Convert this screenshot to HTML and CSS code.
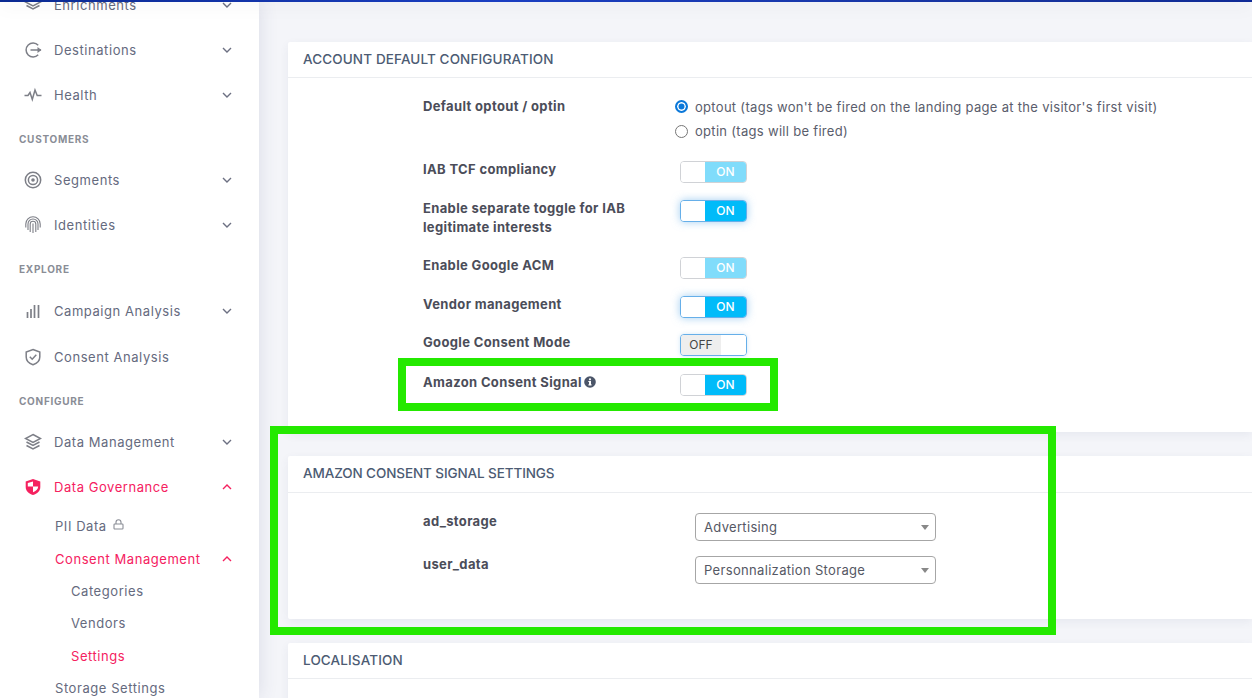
FILE: index.html
```html
<!DOCTYPE html>
<html lang="en">
<head>
<meta charset="utf-8">
<title>Consent Management Settings</title>
<link rel="stylesheet" href="styles.css">
</head>
<body>
<div class="topbar"></div>
<div class="shell">
  <aside class="sidebar">
    <nav class="nav">
      <a class="item"><svg class="ico" viewBox="0 0 18 18"><path d="M9 2 16.5 6 9 10 1.5 6Z"/><path d="M2.5 9.5 9 13l6.5-3.5"/></svg><span>Enrichments</span><svg class="chev" viewBox="0 0 10 6"><path d="M1 1l4 4 4-4"/></svg></a>
      <a class="item"><svg class="ico" viewBox="0 0 18 18"><path d="M14.2 4.2A7 7 0 1 0 14.2 13.8"/><path d="M6.5 9H17"/><path class="fill" d="M13.5 6 17.5 9l-4 3Z"/></svg><span>Destinations</span><svg class="chev" viewBox="0 0 10 6"><path d="M1 1l4 4 4-4"/></svg></a>
      <a class="item"><svg class="ico" viewBox="0 0 18 18"><path d="M.5 9.5H4l2-3 2.3 7L11 4l2.2 5.5h4.3"/></svg><span>Health</span><svg class="chev" viewBox="0 0 10 6"><path d="M1 1l4 4 4-4"/></svg></a>
      <div class="section section-customers">CUSTOMERS</div>
      <a class="item"><svg class="ico" viewBox="0 0 18 18"><circle cx="9" cy="9" r="7.7"/><circle cx="9" cy="9" r="4.6"/><circle class="fill" cx="9" cy="9" r="1.8"/></svg><span>Segments</span><svg class="chev" viewBox="0 0 10 6"><path d="M1 1l4 4 4-4"/></svg></a>
      <a class="item"><svg class="ico ico-thin" viewBox="0 0 18 18"><path d="M1.800 11.500V8a7.200 7.200 0 0 1 14.400 0v3.500"/><path d="M4 14V8a5 5 0 0 1 10 0v6"/><path d="M6.200 16V8a2.800 2.800 0 0 1 5.600 0v8"/><path d="M9 7.500V17"/></svg><span>Identities</span><svg class="chev" viewBox="0 0 10 6"><path d="M1 1l4 4 4-4"/></svg></a>
      <div class="section section-explore">EXPLORE</div>
      <a class="item"><svg class="ico" viewBox="0 0 18 18"><path d="M3.500 10v6M7 7v9M10.500 3v13M14.500 3v13" stroke-width="1.700"/></svg><span>Campaign Analysis</span><svg class="chev" viewBox="0 0 10 6"><path d="M1 1l4 4 4-4"/></svg></a>
      <a class="item item-consent"><svg class="ico" viewBox="0 0 18 18"><path d="M9 1.500 15.800 4v5c0 4-2.800 6.400-6.800 7.700C5 15.400 2.200 13 2.200 9V4Z"/><path d="M5.800 8.800 8.200 11.200 12.300 6.700"/></svg><span>Consent Analysis</span></a>
      <div class="section section-configure">CONFIGURE</div>
      <a class="item"><svg class="ico" viewBox="0 0 18 18"><path d="M9 1.500 16.500 5.500 9 9.500 1.500 5.500Z"/><path d="M2.500 9 9 12.500 15.500 9"/><path d="M2.500 12.500 9 16 15.500 12.500"/></svg><span>Data Management</span><svg class="chev" viewBox="0 0 10 6"><path d="M1 1l4 4 4-4"/></svg></a>
      <a class="item active"><svg class="ico" viewBox="0 0 18 18"><path class="fill" d="M9 1 16.300 3.500v5.500c0 4-3 6.700-7.300 8-4.300-1.300-7.300-4-7.300-8V3.500Z"/><path class="cut" d="M9 3.500v5H3.800V5ZM9 8.500h5.200c-.2 2.800-2.300 4.700-5.200 5.800Z"/></svg><span>Data Governance</span><svg class="chev" viewBox="0 0 10 6"><path d="M1 5l4-4 4 4"/></svg></a>
      <a class="sub">PII Data<svg class="lock" viewBox="0 0 11 11"><path d="M3 5V3.200a2.500 2.500 0 0 1 5 0V5"/><rect x="1" y="5" width="9" height="5" rx=".8"/></svg></a>
      <a class="sub sub-open active"><span>Consent Management</span><svg class="chev" viewBox="0 0 10 6"><path d="M1 5l4-4 4 4"/></svg></a>
      <a class="sub nested">Categories</a>
      <a class="sub nested">Vendors</a>
      <a class="sub nested active">Settings</a>
      <a class="sub">Storage Settings</a>
    </nav>
  </aside>
  <main class="main">
    <section class="card">
      <h2 class="card-head">ACCOUNT DEFAULT CONFIGURATION</h2>
      <div class="card-body body-account">
        <div class="row row-radio">
          <div class="label">Default optout / optin</div>
          <div class="radios">
            <label class="radio"><span class="dot on"></span>optout (tags won't be fired on the landing page at the visitor's first visit)</label>
            <label class="radio"><span class="dot"></span>optin (tags will be fired)</label>
          </div>
        </div>
        <div class="row h39">
          <div class="label">IAB TCF compliancy</div>
          <div class="toggle dim"><span class="knob"></span><span class="state">ON</span></div>
        </div>
        <div class="row h57">
          <div class="label">Enable separate toggle for IAB legitimate interests</div>
          <div class="toggle focus"><span class="knob"></span><span class="state">ON</span></div>
        </div>
        <div class="row h39">
          <div class="label">Enable Google ACM</div>
          <div class="toggle dim"><span class="knob"></span><span class="state">ON</span></div>
        </div>
        <div class="row h38">
          <div class="label">Vendor management</div>
          <div class="toggle focus"><span class="knob"></span><span class="state">ON</span></div>
        </div>
        <div class="row h40">
          <div class="label">Google Consent Mode</div>
          <div class="toggle off"><span class="state">OFF</span><span class="knob"></span></div>
        </div>
        <div class="row">
          <div class="label">Amazon Consent Signal <svg class="info" viewBox="0 0 12 12"><circle cx="6" cy="6" r="5.800"/><rect class="mark" x="5" y="5" width="2" height="4.200"/><rect class="mark" x="4.300" y="8.400" width="3.400" height="1"/><rect class="mark" x="4.300" y="5" width="1.500" height="1"/><circle class="mark" cx="6" cy="3.300" r="1.100"/></svg></div>
          <div class="toggle"><span class="knob"></span><span class="state">ON</span></div>
        </div>
      </div>
    </section>
    <section class="card">
      <h2 class="card-head head-amazon">AMAZON CONSENT SIGNAL SETTINGS</h2>
      <div class="card-body body-amazon">
        <div class="row h43">
          <div class="label">ad_storage</div>
          <div class="select"><span>Advertising</span><i class="caret"></i></div>
        </div>
        <div class="row h43">
          <div class="label">user_data</div>
          <div class="select"><span>Personnalization Storage</span><i class="caret"></i></div>
        </div>
      </div>
    </section>
    <section class="card">
      <h2 class="card-head">LOCALISATION</h2>
      <div class="card-body body-local"></div>
    </section>
  </main>
</div>
<div class="mark-box mark-toggle"></div>
<div class="mark-box mark-settings"></div>
</body>
</html>
```

FILE: styles.css
```css
* { box-sizing: border-box; }
html, body { margin: 0; height: 698px; overflow: hidden; background: #f4f5f9; }
body {
  font-family: Inter, "Noto Sans", sans-serif;
  font-size: 13px;
  color: #5f6478;
  position: relative;
}
.topbar {
  position: relative;
  z-index: 3;
  height: 2px;
  background: linear-gradient(90deg, #0b2a92 0%, #1a3ec2 40%, #17339f 80%, #0f2a96 100%);
  box-shadow: 0 2px 18px rgba(40, 44, 80, .18);
}
.shell { display: flex; height: 696px; overflow: hidden; }

/* Sidebar */
.sidebar {
  position: relative;
  z-index: 2;
  flex: 0 0 259px;
  background: #fff;
  box-shadow: 0 0 18px rgba(60, 64, 110, .14);
  overflow: hidden;
}
.nav { margin-top: -20px; }
.item {
  display: flex;
  align-items: center;
  height: 45px;
  padding: 0 27px 0 24px;
  font-size: 13px;
  letter-spacing: .56px;
  color: #656a7e;
}
.item-consent { height: 46px; padding-top: 1px; }
.ico {
  flex: 0 0 18px;
  width: 18px;
  height: 18px;
  margin-right: 12px;
  fill: none;
  stroke: #7d7f87;
  stroke-width: 1.500;
}
.ico-thin { stroke-width: 1.100; }
.ico .fill { fill: #7d7f87; stroke: none; }
.ico .cut { fill: #fff; stroke: none; }
.chev {
  width: 10px;
  height: 6px;
  margin: 1px 0 0 auto;
  fill: none;
  stroke: #6c7082;
  stroke-width: 1.400;
}
.section {
  display: flex;
  align-items: center;
  height: 40px;
  padding-left: 19px;
  font-size: 10px;
  font-weight: 700;
  letter-spacing: .72px;
  color: #8a8d96;
}
.section-customers { padding-top: 4px; }
.section-explore { height: 41px; padding-top: 3px; }
.section-configure { padding-top: 4px; }
.sub {
  display: flex;
  align-items: center;
  height: 32.5px;
  padding: 1px 27px 0 55px;
  font-size: 13px;
  letter-spacing: .56px;
  color: #656a7e;
}
.sub-open { padding-top: 2px; }
.sub.nested { padding-left: 71px; }
.active, .active .chev { color: #f5215f; stroke: #f5215f; }
.item.active .ico .fill { fill: #f5215f; }
.lock {
  width: 11px;
  height: 11px;
  margin: -2px 0 0 6px;
  fill: none;
  stroke: #8a8d96;
  stroke-width: 1.100;
}

/* Main */
.main { flex: 1; min-width: 0; padding: 40px 0 0 29px; }
.card {
  background: #fff;
  margin-bottom: 24px;
  border-radius: 2px 0 0 2px;
  box-shadow: 0 3px 10px rgba(60, 64, 110, .07);
}
.card-head {
  margin: 0;
  height: 36px;
  padding: 0 15px 2px;
  display: flex;
  align-items: center;
  border-bottom: 1px solid #ebedf0;
  font-size: 13.500px;
  font-weight: 500;
  letter-spacing: .13px;
  color: #4c5b73;
}
.head-amazon { height: 37px; letter-spacing: -.1px; }
.card-body { padding-left: 135px; }
.body-account { height: 354px; padding-top: 19px; }
.body-amazon { height: 126px; padding-top: 19px; }
.body-local { height: 40px; }
.row { display: grid; grid-template-columns: 252px 1fr; align-items: start; }
.row-radio { height: 63px; }
.h38 { height: 38px; }
.h39 { height: 39px; }
.h40 { height: 40px; }
.h43 { height: 43px; }
.h57 { height: 57px; }
.label {
  width: 222px;
  font-size: 13px;
  line-height: 19px;
  font-weight: 700;
  letter-spacing: .35px;
  color: #4b4d59;
}
.info { width: 12px; height: 12px; margin-left: -1px; vertical-align: -1px; fill: #4b5568; }
.info .mark { fill: #fff; }
.radios { display: flex; flex-direction: column; gap: 5px; }
.radio {
  display: flex;
  align-items: center;
  height: 19.500px;
  font-size: 13px;
  letter-spacing: .3px;
  color: #5a5d6c;
}
.dot {
  width: 13px;
  height: 13px;
  margin-right: 7px;
  border: 1px solid #767676;
  border-radius: 50%;
  background: #fff;
}
.dot.on { border: 2px solid #0b78d9; box-shadow: inset 0 0 0 1.500px #fff; background: #0b78d9; }

/* Toggles */
.toggle {
  display: flex;
  width: 67px;
  height: 22px;
  margin: 1px 0 0 5px;
  border: 1px solid #d0d2d6;
  border-radius: 4px;
  overflow: hidden;
  background: #fff;
}
.knob { flex: 1; background: #fff; }
.state {
  flex: 0 0 41px;
  display: flex;
  align-items: center;
  justify-content: center;
  padding-bottom: 2px;
  font-size: 12px;
  font-weight: 500;
  color: #fff;
  background: #00bbf9;
}
.toggle.dim .state { background: #80dcfb; }
.toggle.focus { border-color: #66afe9; box-shadow: 0 0 8px rgba(102, 175, 233, .6); }
.toggle.off { border-color: #66afe9; box-shadow: 0 0 4px rgba(102, 175, 233, .3); }
.toggle.off .state { background: #eee; color: #444; font-weight: 400; flex-basis: 40px; }

/* Selects */
.select {
  display: flex;
  align-items: center;
  justify-content: space-between;
  width: 241px;
  height: 28px;
  margin: 1px 0 0 20px;
  padding: 0 6px 0 8px;
  border: 1px solid #a6a6a6;
  border-radius: 4px;
  font-size: 13px;
  letter-spacing: .33px;
  color: #555864;
}
.caret {
  width: 0;
  height: 0;
  border-left: 4px solid transparent;
  border-right: 4px solid transparent;
  border-top: 5px solid #888;
}

/* Annotation frames drawn over the screenshot */
.mark-box { position: absolute; z-index: 4; border: 8px solid #24e900; pointer-events: none; }
.mark-toggle { left: 398px; top: 358px; width: 380px; height: 53px; }
.mark-settings { left: 270px; top: 426px; width: 786px; height: 209px; }
```
